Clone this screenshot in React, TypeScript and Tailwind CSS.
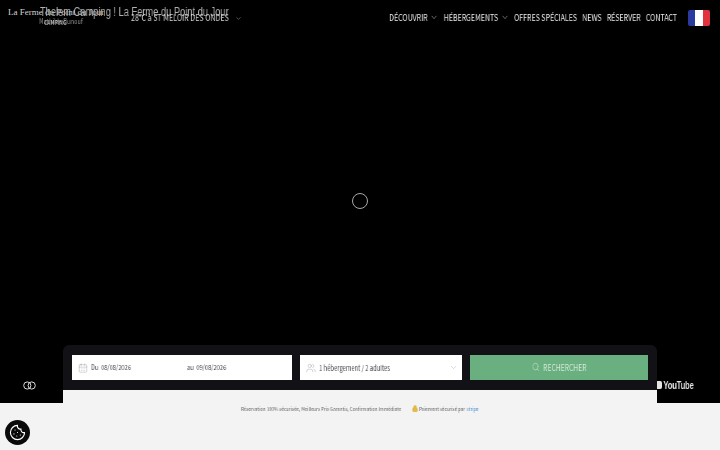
import { ChevronDown, Search, CalendarDays, Cookie, Lock, Users } from "lucide-react";

function Nav({ label, chevron }: { label: string; chevron?: boolean }) {
  return (
    <span className="flex items-center gap-[3px] whitespace-nowrap">
      {label}
      {chevron && <ChevronDown size={11} strokeWidth={1.2} className="text-[#d8d8d8]" />}
    </span>
  );
}

export default function App() {
  return (
    <div className="h-[450px] w-[720px] overflow-hidden bg-[#f3f3f3] [font-family:'Noto_Sans_CJK_JP',sans-serif]">
      <div className="flex h-[403px] flex-col bg-black">
        <header className="relative flex h-[36px] items-center justify-between pl-[131px] pr-[10px]">
          <span className="absolute left-[8px] top-[6px] whitespace-nowrap font-['Liberation_Serif',serif] text-[9px] text-[#d4d4d4]">
            La Ferme du Point du Jour
          </span>
          <span className="absolute left-[39px] top-[16px] origin-left scale-x-[0.81] whitespace-nowrap text-[7px] text-[#8f8f8f] will-change-transform">
            Mathilde Bunouf
          </span>
          <span className="absolute left-[40px] top-[3px] origin-left scale-x-[0.775] whitespace-nowrap font-['Liberation_Sans',sans-serif] text-[12px] font-medium text-[#b0b0b0] will-change-transform">
            Thelem Camping ! La Ferme du Point du Jour
          </span>
          <span className="absolute left-[44px] top-[18px] origin-left scale-x-[0.77] whitespace-nowrap text-[6.5px] font-medium text-[#bdbdbd] will-change-transform">
            CAMPING
          </span>
          <div className="flex items-center">
            <span className="w-[104px] origin-left scale-x-[0.79] whitespace-nowrap text-[9px] text-[#d4d4d4] will-change-transform">
              28°C à ST MELOIR DES ONDES
            </span>
            <ChevronDown size={7} strokeWidth={1.4} className="text-[#c4c4c4]" />
          </div>
          <div className="flex items-center">
            <nav className="flex origin-right scale-x-[0.78] items-center gap-[6.5px] text-[9px] text-[#ececec] will-change-transform">
              <Nav label="DÉCOUVRIR" chevron />
              <Nav label="HÉBERGEMENTS" chevron />
              <Nav label="OFFRES SPÉCIALES" />
              <Nav label="NEWS" />
              <Nav label="RÉSERVER" />
              <Nav label="CONTACT" />
            </nav>
            <div className="ml-[11px] flex h-[16px] w-[22px] overflow-hidden rounded-[2px]">
              <span className="flex-1 bg-[#2a3a9e]" />
              <span className="flex-1 bg-white" />
              <span className="flex-1 bg-[#e0333e]" />
            </div>
          </div>
        </header>

        <div className="flex flex-1 items-start justify-center pt-[157px]">
          <div className="h-[16px] w-[16px] rounded-full border border-[#a8a8a8]" />
        </div>

        <div className="flex items-end">
          <div className="flex h-[58px] w-[63px] items-center justify-center pt-[22px] pr-[5px]">
            <svg width="13" height="9" viewBox="0 0 13 9" fill="none" stroke="#dcdcdc" strokeWidth="1">
              <circle cx="4.3" cy="4.5" r="3.6" />
              <circle cx="8.7" cy="4.5" r="3.6" />
            </svg>
          </div>
          <div className="w-[594px]">
            <div className="flex h-[45px] gap-[8px] rounded-t-[6px] bg-[#111116] px-[9px] py-[10px]">
              <div className="flex w-[220px] items-center bg-white pl-[6px] text-[7px] text-[#444]">
                <CalendarDays size={10} strokeWidth={1} className="shrink-0 text-[#999]" />
                <span className="ml-[3px] w-[96px] shrink-0 origin-left scale-x-[0.82] whitespace-nowrap will-change-transform">Du&nbsp; 08/08/2026</span>
                <span className="origin-left scale-x-[0.82] whitespace-nowrap will-change-transform">au&nbsp; 09/08/2026</span>
              </div>
              <div className="flex w-[162px] items-center bg-white px-[6px] text-[7.5px] text-[#444]">
                <Users size={10} strokeWidth={1} className="shrink-0 text-[#999]" />
                <span className="ml-[3px] w-[130px] shrink-0 origin-left scale-x-[0.78] whitespace-nowrap will-change-transform">1 hébergement / 2 adultes</span>
                <ChevronDown size={9} strokeWidth={1} className="ml-auto shrink-0 text-[#999]" />
              </div>
              <div className="flex w-[178px] items-center justify-center bg-[#6aaf7f]">
                <span className="flex scale-x-[0.8] items-center gap-[4px] whitespace-nowrap text-[8.5px] text-[#d5ead9] will-change-transform">
                  <Search size={10} strokeWidth={1.4} />
                  RECHERCHER
                </span>
              </div>
            </div>
            <div className="h-[13px] bg-[#f3f3f3]" />
          </div>
          <div className="flex h-[58px] flex-1 items-center pt-[22px]">
            <span className="flex origin-left scale-x-[0.7] items-center gap-[2px] font-['Liberation_Sans',sans-serif] text-[11px] font-bold tracking-[-0.3px] text-[#e4e4e4] will-change-transform">
              <span className="h-[8px] w-[7px] rounded-r-[2px] bg-[#e4e4e4]" />
              YouTube
            </span>
          </div>
        </div>
      </div>

      <div className="flex">
        <div className="w-[63px]">
          <div className="ml-[5px] mt-[17px] flex h-[25px] w-[25px] items-center justify-center rounded-full bg-[#0a0a0a]">
            <Cookie size={17} strokeWidth={1.6} className="text-white" />
          </div>
        </div>
        <div className="flex h-[10px] w-[594px] items-center justify-center pt-[2px]">
          <div className="flex scale-x-[0.895] items-center gap-[12px] whitespace-nowrap text-[5px] text-[#666] will-change-transform">
            <span>Réservation 100% sécurisée, Meilleurs Prix Garantis, Confirmation Immédiate</span>
            <span className="flex items-center gap-[1px]">
              <Lock size={7} strokeWidth={2} className="text-[#d4a72c]" fill="#e8bd3f" />
              Paiement sécurisé par
              <span className="ml-[1px] text-[#4a8fd0]">stripe</span>
            </span>
          </div>
        </div>
      </div>
    </div>
  );
}
